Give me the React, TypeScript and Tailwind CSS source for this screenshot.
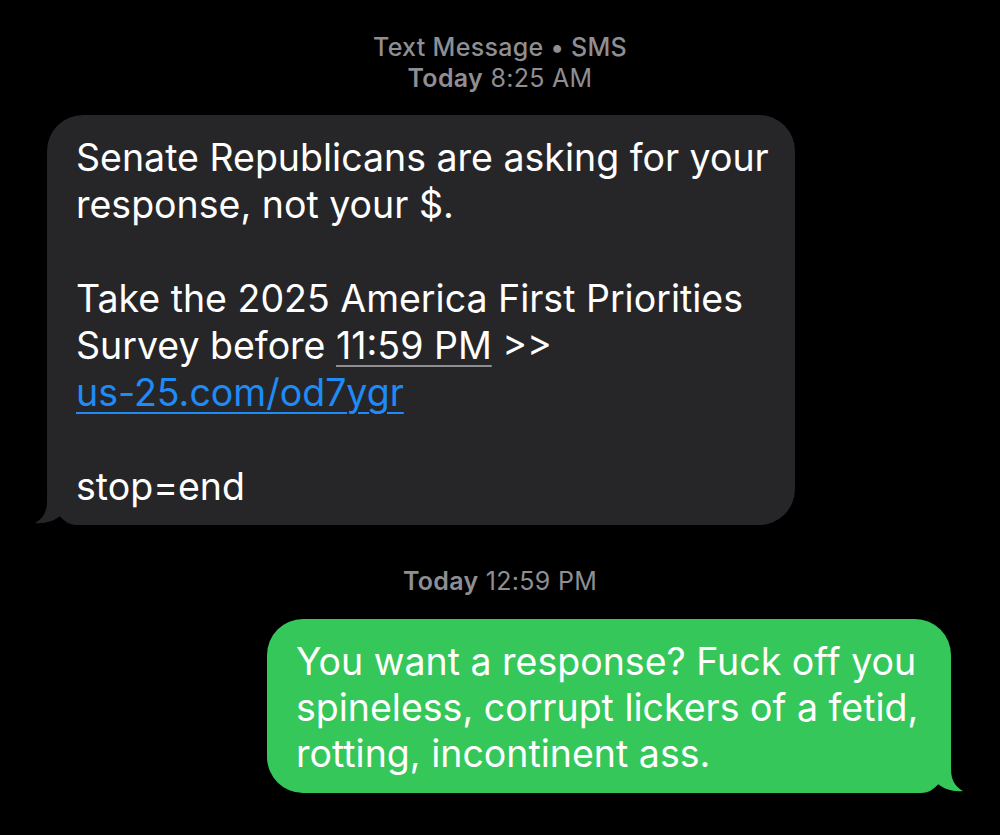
import React from "react";

function GrayTail() {
  return (
    <svg
      className="absolute left-[-14px] bottom-0"
      width="50"
      height="40"
      viewBox="0 0 50 40"
    >
      <path
        d="M14 0 L50 0 L50 40 L44 40 C36 40 31 36 27 31 C21 36 12 39 2 38 C9 34 14 28 14 16 Z"
        fill="#262629"
      />
    </svg>
  );
}

function GreenTail() {
  return (
    <svg
      className="absolute right-[-14px] bottom-0"
      width="50"
      height="40"
      viewBox="0 0 50 40"
    >
      <g transform="translate(50 0) scale(-1 1)">
        <path
          d="M14 0 L50 0 L50 40 L44 40 C36 40 31 36 27 31 C21 36 12 39 2 38 C9 34 14 28 14 16 Z"
          fill="#35c759"
        />
      </g>
    </svg>
  );
}

export default function App() {
  return (
    <div
      className="w-[1000px] h-[835px] bg-black overflow-hidden flex flex-col"
      style={{ fontFamily: "Inter, 'Noto Sans', sans-serif" }}
    >
      <div className="pt-[32px] flex flex-col items-center text-[25px] leading-[31px] tracking-[0.3px] text-[#8e8e93]">
        <div className="font-medium">Text Message • SMS</div>
        <div>
          <span className="font-semibold">Today</span> 8:25 AM
        </div>
      </div>

      <div className="mt-[21px] ml-[47px] w-[748px] relative">
        <div className="relative z-10 rounded-[36px] bg-[#262629] pl-[29px] pr-[20px] pt-[18.5px] pb-[15.5px] text-[37.5px] leading-[47px] text-white whitespace-nowrap">
          <div>Senate Republicans are asking for your</div>
          <div>response, not your $.</div>
          <div>&nbsp;</div>
          <div>Take the 2025 America First Priorities</div>
          <div>
            Survey before{" "}
            <span className="underline decoration-[#8e8e93] decoration-[2px] underline-offset-[6px]">
              11:59 PM
            </span>{" "}
            &gt;&gt;
          </div>
          <div className="text-[#1e8bf6] underline decoration-[2px] underline-offset-[6px]">
            us-25.com/od7ygr
          </div>
          <div>&nbsp;</div>
          <div>stop=end</div>
        </div>
        <GrayTail />
      </div>

      <div className="mt-[40.5px] flex justify-center text-[25px] leading-[31px] tracking-[0.3px] text-[#8e8e93]">
        <span>
          <span className="font-semibold">Today</span> 12:59 PM
        </span>
      </div>

      <div className="mt-[22.5px] self-end mr-[49px] w-[684px] relative">
        <div className="relative z-10 rounded-[36px] bg-[#35c759] pl-[29px] pr-[20px] pt-[20px] pb-[16px] text-[37.5px] leading-[46px] text-white whitespace-nowrap">
          <div>You want a response? Fuck off you</div>
          <div>spineless, corrupt lickers of a fetid,</div>
          <div>rotting, incontinent ass.</div>
        </div>
        <GreenTail />
      </div>
    </div>
  );
}
